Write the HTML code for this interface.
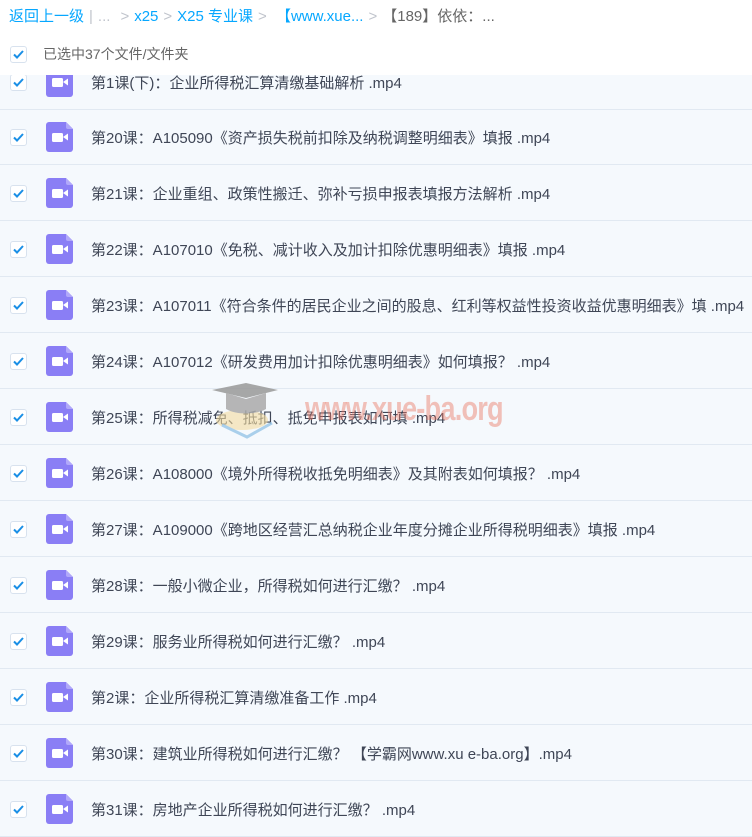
<!DOCTYPE html>
<html><head><meta charset="utf-8"><style>
body{margin:0;width:752px;height:830px;overflow:hidden;background:#f5f9fd;font-family:"Liberation Sans","Noto Sans CJK SC",sans-serif;position:relative}
.hdr{position:absolute;left:0;top:0;width:752px;height:75px;background:#fff;z-index:2}
.bc{position:absolute;left:9px;top:5px;font-size:15px;color:#06a7ff;white-space:nowrap}
.bc .g{color:#c0c4cc;margin:0 5px}
.bc .d{color:#666}
.sel{position:absolute;left:43px;top:44px;font-size:14px;color:#666}
.cb{position:absolute;left:10px;width:15px;height:15px;border:1px solid #d8e2ee;border-radius:3px;background:#fff}
.cb svg{position:absolute;left:1px;top:1px}
.row{position:absolute;left:0;width:752px;height:55px;border-bottom:1px solid #e1e9f2}
.row .cb{top:20px}
.ic{position:absolute;left:46px;top:13px;width:27px;height:30px}
.t{position:absolute;left:91px;top:18px;font-size:15px;color:#3f4656;white-space:nowrap}
.wm{position:absolute;left:305px;top:390px;font:bold 34px "Liberation Sans",sans-serif;color:rgba(235,120,100,.45);letter-spacing:-1px;transform:scaleX(.8);transform-origin:left;z-index:3}
</style></head><body>
<svg width="0" height="0" style="position:absolute"><defs>
<symbol id="ck" viewBox="0 0 13 13"><path d="M2 6.5l3 3 6-6.5" stroke="#1a8fe6" stroke-width="2" fill="none"/></symbol>
<symbol id="vi" viewBox="0 0 27 30"><path d="M3 0h17l7 7v20a3 3 0 0 1-3 3H3a3 3 0 0 1-3-3V3a3 3 0 0 1 3-3z" fill="#8a7ef5"/><path d="M20 0v5a2 2 0 0 0 2 2h5z" fill="#b1a8fa"/><rect x="6" y="11" width="11" height="9" rx="1.5" fill="#fff"/><path d="M17 15l5-3.5v7z" fill="#fff"/></symbol>
</defs></svg>
<div class="hdr">
<div class="bc">返回上一级<span class="g">|</span><span class="g" style="margin-left:0">...</span><span class="g">&gt;</span>x25<span class="g">&gt;</span>X25 专业课<span class="g">&gt;</span> 【www.xue...<span class="g">&gt;</span><span class="d">【189】依依：...</span></div>
<div class="cb" style="top:46px"><svg width="13" height="13"><use href="#ck"/></svg></div>
<div class="sel">已选中37个文件/文件夹</div>
</div>

<div class="row" style="top:54px"><div class="cb"><svg width="13" height="13"><use href="#ck"/></svg></div><svg class="ic"><use href="#vi"/></svg><div class="t">第1课(下)：企业所得税汇算清缴基础解析 .mp4</div></div>
<div class="row" style="top:109px"><div class="cb"><svg width="13" height="13"><use href="#ck"/></svg></div><svg class="ic"><use href="#vi"/></svg><div class="t">第20课：A105090《资产损失税前扣除及纳税调整明细表》填报 .mp4</div></div>
<div class="row" style="top:165px"><div class="cb"><svg width="13" height="13"><use href="#ck"/></svg></div><svg class="ic"><use href="#vi"/></svg><div class="t">第21课：企业重组、政策性搬迁、弥补亏损申报表填报方法解析 .mp4</div></div>
<div class="row" style="top:221px"><div class="cb"><svg width="13" height="13"><use href="#ck"/></svg></div><svg class="ic"><use href="#vi"/></svg><div class="t">第22课：A107010《免税、减计收入及加计扣除优惠明细表》填报 .mp4</div></div>
<div class="row" style="top:277px"><div class="cb"><svg width="13" height="13"><use href="#ck"/></svg></div><svg class="ic"><use href="#vi"/></svg><div class="t">第23课：A107011《符合条件的居民企业之间的股息、红利等权益性投资收益优惠明细表》填 .mp4</div></div>
<div class="row" style="top:333px"><div class="cb"><svg width="13" height="13"><use href="#ck"/></svg></div><svg class="ic"><use href="#vi"/></svg><div class="t">第24课：A107012《研发费用加计扣除优惠明细表》如何填报？ .mp4</div></div>
<div class="row" style="top:389px"><div class="cb"><svg width="13" height="13"><use href="#ck"/></svg></div><svg class="ic"><use href="#vi"/></svg><div class="t">第25课：所得税减免、抵扣、抵免申报表如何填 .mp4</div></div>
<div class="row" style="top:445px"><div class="cb"><svg width="13" height="13"><use href="#ck"/></svg></div><svg class="ic"><use href="#vi"/></svg><div class="t">第26课：A108000《境外所得税收抵免明细表》及其附表如何填报？ .mp4</div></div>
<div class="row" style="top:501px"><div class="cb"><svg width="13" height="13"><use href="#ck"/></svg></div><svg class="ic"><use href="#vi"/></svg><div class="t">第27课：A109000《跨地区经营汇总纳税企业年度分摊企业所得税明细表》填报 .mp4</div></div>
<div class="row" style="top:557px"><div class="cb"><svg width="13" height="13"><use href="#ck"/></svg></div><svg class="ic"><use href="#vi"/></svg><div class="t">第28课：一般小微企业，所得税如何进行汇缴？ .mp4</div></div>
<div class="row" style="top:613px"><div class="cb"><svg width="13" height="13"><use href="#ck"/></svg></div><svg class="ic"><use href="#vi"/></svg><div class="t">第29课：服务业所得税如何进行汇缴？ .mp4</div></div>
<div class="row" style="top:669px"><div class="cb"><svg width="13" height="13"><use href="#ck"/></svg></div><svg class="ic"><use href="#vi"/></svg><div class="t">第2课：企业所得税汇算清缴准备工作 .mp4</div></div>
<div class="row" style="top:725px"><div class="cb"><svg width="13" height="13"><use href="#ck"/></svg></div><svg class="ic"><use href="#vi"/></svg><div class="t">第30课：建筑业所得税如何进行汇缴？ 【学霸网www.xu e-ba.org】.mp4</div></div>
<div class="row" style="top:781px"><div class="cb"><svg width="13" height="13"><use href="#ck"/></svg></div><svg class="ic"><use href="#vi"/></svg><div class="t">第31课：房地产企业所得税如何进行汇缴？ .mp4</div></div>

<div class="wm">www.xue-ba.org</div>
<svg style="position:absolute;left:212px;top:380px;z-index:3;opacity:.85" width="70" height="60" viewBox="0 0 70 60"><ellipse cx="30" cy="40" rx="26" ry="10" fill="#f3dca0" opacity=".7"/><path d="M10 45l25 12 25-14" stroke="#9cc8e8" stroke-width="3" fill="none"/><path d="M0 10L34 3 66 10 34 18z" fill="#999"/><path d="M14 13v16c10 6 30 6 40 0V13L34 19z" fill="#aaa"/></svg>
</body></html>
